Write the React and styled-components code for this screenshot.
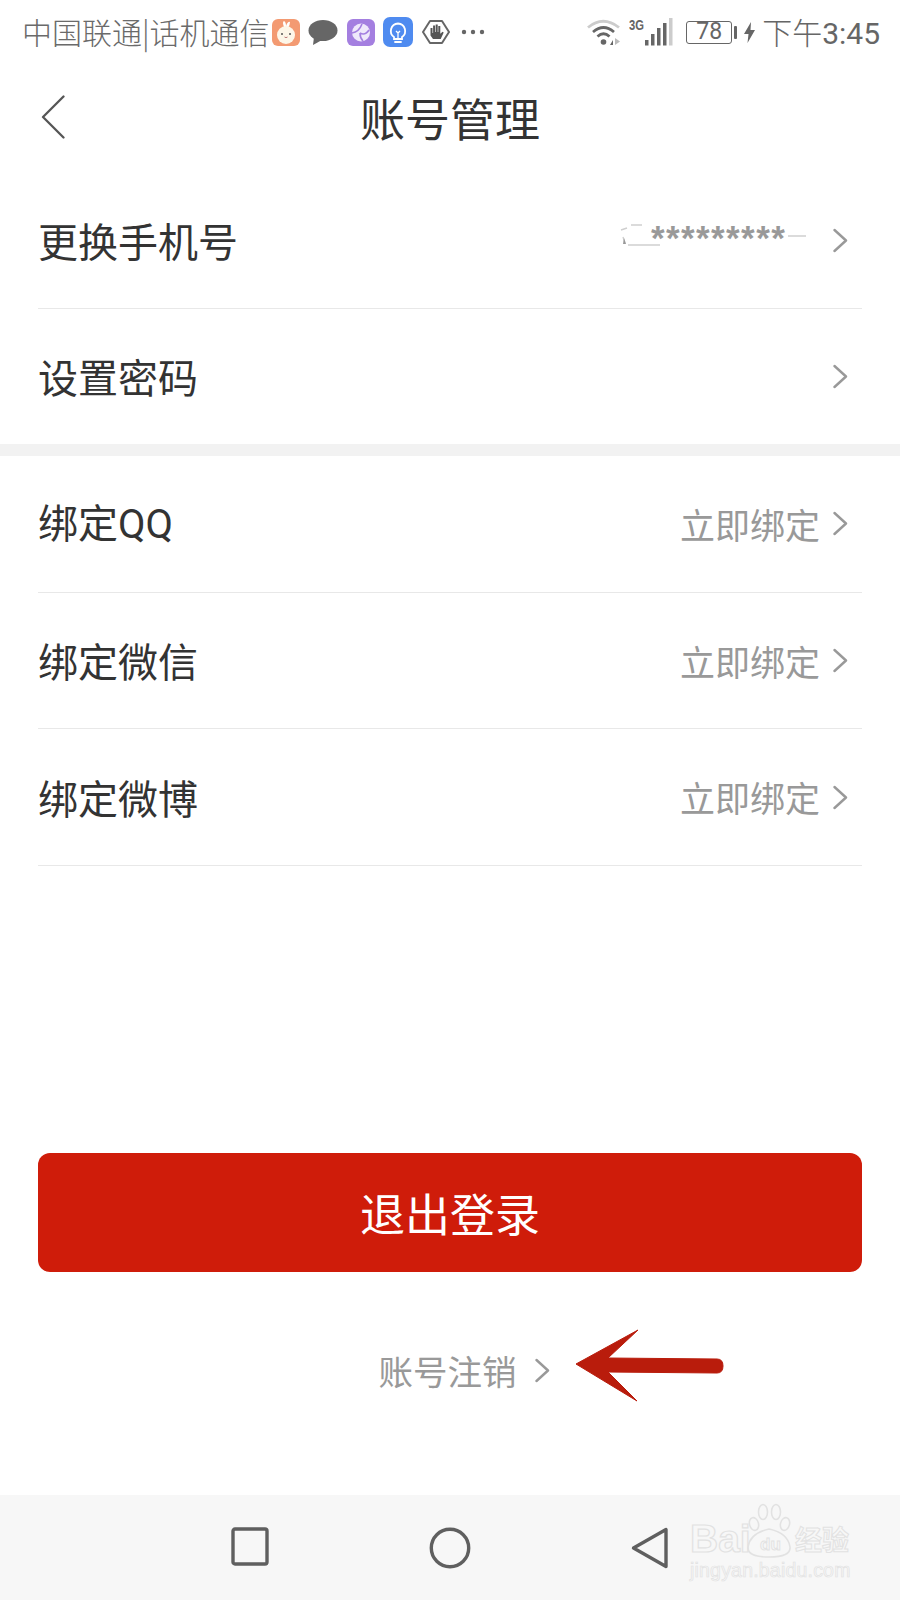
import React from "react";
import styled, { createGlobalStyle } from "styled-components";

const Global = createGlobalStyle`
  html, body { margin: 0; padding: 0; background: #fff; }
  body { font-family: "Noto Sans CJK SC", "Liberation Sans", sans-serif; }
`;
const Page = styled.div`
  position: relative; width: 900px; height: 1600px; display: flex; flex-direction: column;
  background: #fff; overflow: hidden;
`;
const StatusBar = styled.div`
  height: 64px; display: flex; align-items: center; padding: 0 20px 0 22px; color: #6a6a6a; box-sizing: border-box;
`;
const Carrier = styled.span`
  font-size: 30px; line-height: 1; white-space: nowrap; font-weight: 300; margin-top: -3px;
`;
const StatusIcons = styled.div`
  display: flex; align-items: center; gap: 8.5px; margin-left: 2px;
`;
const Spacer = styled.div`flex: 1;`;
const StatusRight = styled.div`
  display: flex; align-items: center;
`;
const Battery = styled.div`
  width: 46px; height: 23px; margin-left: 13px; border: 1.5px solid #666; border-radius: 3px; box-sizing: border-box;
  font: 400 23px/20px "Roboto", sans-serif; text-align: center; color: #666;
`;
const BatteryCap = styled.div`
  width: 3px; height: 13px; margin-left: 2px; background: #666; border-radius: 1px;
`;
const Clock = styled.span`
  font-size: 30px; line-height: 1; font-weight: 300; margin-left: 7px; white-space: nowrap; color: #666;
  & b { font: 400 30px/1 "Roboto", sans-serif; }
`;
const NavBar = styled.header`
  height: 108px; display: flex; align-items: center; justify-content: center; position: relative;
`;
const Back = styled.svg`
  position: absolute; left: 41px; top: 31px;
`;
const Title = styled.h1`
  margin: -2px 0 0; font-size: 45px; font-weight: 400; color: #333; line-height: 1;
`;
const Section = styled.section`
  padding: 0 38px;
`;
const Row = styled.div`
  height: ${p => p.$h || 136.7}px; box-sizing: border-box; display: flex; align-items: center; justify-content: space-between;
  border-bottom: ${p => (p.$plain ? "0" : "1.5px solid #e8e8e8")}; padding-right: 14px;
`;
const Label = styled.span`
  font-size: 40px; color: #333; line-height: 1; font-weight: 400; white-space: nowrap; margin-top: -1px;
  & b { font: 400 40px/1 "Roboto", sans-serif; }
`;
const RightSide = styled.div`
  display: flex; align-items: center; gap: 13px;
`;
const Hint = styled.span`
  font-size: 35px; color: #999; line-height: 1; font-weight: 400; margin-top: -1px;
`;
const Band = styled.div`
  height: 12px; background: #f2f2f2;
`;
const Masked = styled.div`
  position: relative; width: 198px; height: 50px; margin-right: 2px;
`;
const Stars = styled.span`
  position: absolute; left: 31px; top: 4px; white-space: nowrap;
  font: 700 35px/38px "Liberation Sans", sans-serif; letter-spacing: 1.4px; color: #999;
`;
const Residue = styled.svg`
  position: absolute; left: 0; top: 0;
`;
const Main = styled.main`
  flex: 1; display: flex; flex-direction: column; padding: 287px 38px 0;
`;
const Logout = styled.button`
  height: 119px; border: 0; border-radius: 12px; background: #cf1c0a; color: #fff; font-family: inherit;
  font-size: 45px; font-weight: 400; padding: 0;
`;
const CancelLink = styled.div`
  margin-top: 76px; display: flex; align-items: center; justify-content: center; gap: 18px; color: #999;
  padding-left: 28px;
`;
const CancelText = styled.span`
  font-size: 34.5px; line-height: 44px; color: #999;
`;
const Annotation = styled.svg`
  position: absolute; left: 570px; top: 1325px;
`;
const SystemBar = styled.footer`
  position: relative; height: 105px; background: #f7f7f7; display: grid; grid-template-columns: repeat(3, 200px);
  justify-content: center; justify-items: center; align-items: start; padding-top: 32px; box-sizing: border-box;
`;
const Watermark = styled.div`
  position: absolute; left: 688px; top: 8px; width: 168px; height: 92px; color: transparent;
`;
const MarkLogo = styled.span`
  position: absolute; left: 2px; top: 12px; font: 700 39px/48px "Liberation Sans", sans-serif;
  -webkit-text-stroke: 1.2px #e2e2e2;
`;
const MarkCn = styled.span`
  position: absolute; left: 107px; top: 19px; font-size: 27px; line-height: 34px; font-weight: 700; white-space: nowrap;
  -webkit-text-stroke: 1px #e2e2e2;
`;
const MarkUrl = styled.span`
  position: absolute; left: 2px; top: 55px; font: 400 19.5px/24px "Liberation Sans", sans-serif; white-space: nowrap;
  letter-spacing: .2px; -webkit-text-stroke: .7px #e2e2e2;
`;
const Paw = styled.svg`
  position: absolute; left: 58px; top: 0;
`;
const PawText = styled.text`
  font: 700 17px "Liberation Sans", sans-serif; fill: none; stroke: #e2e2e2; stroke-width: .9;
`;

const Chevron = ({ color = "#999" }) => (
  <svg width="15" height="25" viewBox="0 0 15 25" fill="none">
    <path d="M1.5 2 L13 12.5 L1.5 23" stroke={color} strokeWidth="2.4" strokeLinecap="round" strokeLinejoin="round" />
  </svg>
);

const LinkRow = ({ label, hint }) => (
  <Row>
    <Label>{label}</Label>
    <RightSide>
      {hint && <Hint>{hint}</Hint>}
      <Chevron />
    </RightSide>
  </Row>
);

const Rabbit = () => (
  <svg width="28" height="27" viewBox="0 0 28 27">
    <rect width="28" height="27" rx="6" fill="#f39a72" />
    <path d="M12 8 Q10 3 12 2 Q14 3 14 7 Q16 2 18 3 Q18 6 16 9Z" fill="#fff" />
    <circle cx="14" cy="16" r="9" fill="#fdf6e8" />
    <circle cx="10" cy="15" r="1" fill="#555" /><circle cx="18" cy="15" r="1" fill="#555" />
    <path d="M12.5 18 q1.5 1.4 3 0" stroke="#b77" fill="none" />
  </svg>
);
const Bubble = () => (
  <svg width="30" height="27" viewBox="0 0 30 27">
    <ellipse cx="15" cy="11.5" rx="14.5" ry="10.5" fill="#666" />
    <path d="M6 18 L5 26 L14 21Z" fill="#666" />
  </svg>
);
const Ball = () => (
  <svg width="28" height="27" viewBox="0 0 28 27">
    <rect width="28" height="27" rx="6" fill="#a47fe0" />
    <circle cx="14" cy="13.5" r="9" fill="#efe8fb" />
    <path d="M5 14 Q12 13 15 5 M13 14 Q18 17 22 11 M13 14 Q13 19 16 22" stroke="#a47fe0" strokeWidth="1.6" fill="none" />
  </svg>
);
const Bulb = () => (
  <svg width="30" height="30" viewBox="0 0 30 30">
    <rect width="30" height="30" rx="7" fill="#4f8bf0" />
    <path d="M15 6.5 a7.5 7.5 0 0 1 4 13.6 V22 h-8 v-1.9 A7.5 7.5 0 0 1 15 6.5Z M12 25 h6" stroke="#fff" strokeWidth="1.8" fill="none" strokeLinecap="round" />
    <path d="M13 14 l2 2 l2 -2 M15 16 v5" stroke="#fff" strokeWidth="1.3" fill="none" />
  </svg>
);
const HandHex = () => (
  <svg width="28" height="26" viewBox="0 0 28 26">
    <path d="M8 2 H20 L27 13 L20 24 H8 L1 13Z" fill="#fff" stroke="#666" strokeWidth="2" strokeLinejoin="round" />
    <path d="M8.5 9 h2 v5 h.6 V6.5 h2 V13 h.6 V5.5 h2 V13 h.6 V7 h2 v7.5 h.5 l1.6 -1.8 l1.3 .9 l-3 6.4 H11 l-2.5 -3.5Z" fill="#555" />
  </svg>
);
const Dots = () => (
  <svg width="24" height="6" viewBox="0 0 24 6" style={{ marginLeft: 3 }}>
    <circle cx="3" cy="3" r="2.2" fill="#666" /><circle cx="12" cy="3" r="2.2" fill="#666" /><circle cx="21" cy="3" r="2.2" fill="#666" />
  </svg>
);
const Wifi = () => (
  <svg width="36" height="28" viewBox="0 0 36 28" fill="none">
    <path d="M1 9.5 Q16 -3 32 9.5" stroke="#ccc" strokeWidth="2.8" />
    <path d="M6 14 Q16.5 5 27 14" stroke="#666" strokeWidth="2.8" />
    <path d="M10.5 18.5 Q16.5 13 22.5 18.5" stroke="#666" strokeWidth="2.8" />
    <circle cx="16.5" cy="24" r="2.8" fill="#666" />
    <path d="M26 27 v-5 l-3 5z" fill="#666" /><path d="M28 20 v7 l5 -3.5z" fill="#bbb" />
  </svg>
);
const Signal = () => (
  <svg width="44" height="30" viewBox="0 0 44 30" style={{ marginLeft: 6 }}>
    <text x="0" y="13" fontFamily="Liberation Sans" fontWeight="700" fontSize="15" textLength="15" lengthAdjust="spacingAndGlyphs" fill="#666">3G</text>
    <rect x="16" y="23" width="3.5" height="5.5" fill="#666" />
    <rect x="22" y="17" width="3.5" height="11.5" fill="#666" />
    <rect x="28" y="11" width="3.5" height="17.5" fill="#666" />
    <rect x="34" y="6" width="3.5" height="22.5" fill="#666" />
    <rect x="40" y="1" width="3.5" height="27.5" fill="#ccc" />
  </svg>
);
const Bolt = () => (
  <svg width="11" height="21" viewBox="0 0 11 21" style={{ marginLeft: 7 }}>
    <path d="M7 0 L0 12 H4.5 L3.5 21 L11 8 H6.5Z" fill="#666" />
  </svg>
);

export default function App() {
  return (
    <Page>
      <Global />
      <StatusBar>
        <Carrier>中国联通|话机通信</Carrier>
        <StatusIcons>
          <Rabbit /><Bubble /><Ball /><Bulb /><HandHex /><Dots />
        </StatusIcons>
        <Spacer />
        <StatusRight>
          <Wifi /><Signal />
          <Battery>78</Battery><BatteryCap /><Bolt />
          <Clock>下午<b>3:45</b></Clock>
        </StatusRight>
      </StatusBar>
      <NavBar>
        <Back width="24" height="44" viewBox="0 0 24 44" fill="none">
          <path d="M22.5 1.5 L2 22 L22.5 42.5" stroke="#555" strokeWidth="2.3" strokeLinecap="round" strokeLinejoin="round" />
        </Back>
        <Title>账号管理</Title>
      </NavBar>
      <Section>
        <Row $h={137}>
          <Label>更换手机号</Label>
          <RightSide>
            <Masked>
              <Residue width="198" height="50" viewBox="0 0 198 50" fill="none">
                <path d="M1 15 L7 13 M11 10 H22 M3 22 L5 28 M8 30 H40 M168 21 H186" stroke="#cfcfcf" strokeWidth="1.4" />
                <path d="M4 23 L6 29 H3Z" fill="#999" />
              </Residue>
              <Stars>*********</Stars>
            </Masked>
            <Chevron />
          </RightSide>
        </Row>
        <Row $plain $h={135}>
          <Label>设置密码</Label>
          <RightSide><Chevron /></RightSide>
        </Row>
      </Section>
      <Band />
      <Section>
        <Row>
          <Label>绑定<b>QQ</b></Label>
          <RightSide><Hint>立即绑定</Hint><Chevron /></RightSide>
        </Row>
        <LinkRow label="绑定微信" hint="立即绑定" />
        <LinkRow label="绑定微博" hint="立即绑定" />
      </Section>
      <Main>
        <Logout>退出登录</Logout>
        <CancelLink>
          <CancelText>账号注销</CancelText>
          <Chevron />
        </CancelLink>
      </Main>
      <Annotation width="160" height="80" viewBox="0 0 160 80">
        <path d="M6 39 L68 5 L38 33 L147 34 Q153 34 153 41 Q153 48 147 48 L38 47 L67 76 Z" fill="#b91c0c" stroke="#b91c0c" strokeLinejoin="round" />
      </Annotation>
      <SystemBar>
        <svg width="38" height="39" viewBox="0 0 38 39" fill="none">
          <rect x="2" y="2" width="34" height="35" rx="2" stroke="#5f5f5f" strokeWidth="3.4" />
        </svg>
        <svg width="42" height="42" viewBox="0 0 42 42" fill="none">
          <circle cx="21" cy="21" r="18.7" stroke="#5f5f5f" strokeWidth="3.4" />
        </svg>
        <svg width="38" height="42" viewBox="0 0 38 42" fill="none">
          <path d="M35 2.5 V39.5 L2.5 21 Z" stroke="#5f5f5f" strokeWidth="3.4" strokeLinejoin="round" />
        </svg>
        <Watermark>
          <Paw width="46" height="56" viewBox="0 0 46 56" fill="none" stroke="#e2e2e2" strokeWidth="1.6">
            <ellipse cx="8" cy="21" rx="4.5" ry="6.5" transform="rotate(-15 8 21)" />
            <ellipse cx="17" cy="9" rx="4.5" ry="7.5" />
            <ellipse cx="30" cy="9" rx="4.5" ry="7.5" />
            <ellipse cx="39" cy="21" rx="4.5" ry="6.5" transform="rotate(15 39 21)" />
            <path d="M2 44 Q4 30 23 26 Q42 30 44 44 Q45 54 23 54 Q1 54 2 44Z" />
            <PawText x="14" y="47">du</PawText>
          </Paw>
          <MarkLogo>Bai</MarkLogo>
          <MarkCn>经验</MarkCn>
          <MarkUrl>jingyan.baidu.com</MarkUrl>
        </Watermark>
      </SystemBar>
    </Page>
  );
}
